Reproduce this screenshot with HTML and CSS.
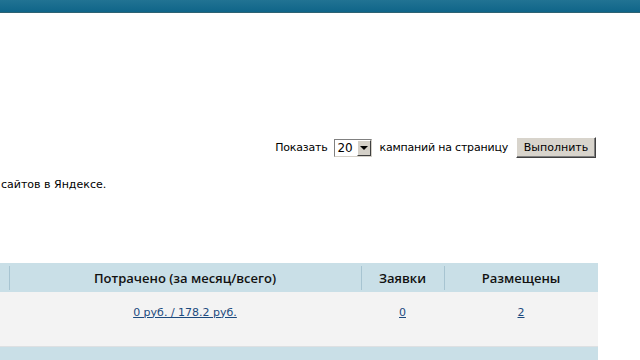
FILE: index.html
```html
<!DOCTYPE html>
<html lang="ru">
<head>
  <meta charset="UTF-8">
  <title>Кампании</title>
  <link rel="stylesheet" href="styles.css">
</head>
<body>
  <div class="topbar"></div>

  <div class="content">
    <form class="pager">
      <span>Показать</span>
      <span class="select">
        <span class="select-value">20</span>
        <span class="select-arrow"></span>
      </span>
      <span>кампаний на страницу</span>
      <button type="button" class="btn">Выполнить</button>
    </form>

    <p class="note">сайтов в Яндексе.</p>

    <table class="campaigns">
      <tr class="head">
        <th class="edge"></th>
        <th class="spent">Потрачено (за месяц/всего)</th>
        <th class="bids">Заявки</th>
        <th class="placed">Размещены</th>
      </tr>
      <tr class="row">
        <td class="edge"></td>
        <td><a href="#">0 руб. / 178.2 руб.</a></td>
        <td><a href="#">0</a></td>
        <td><a href="#">2</a></td>
      </tr>
      <tr class="foot">
        <td colspan="4"></td>
      </tr>
    </table>
  </div>
</body>
</html>
```

FILE: styles.css
```css
body {
  margin: 0;
  background: #fff;
  font-family: "DejaVu Sans", Verdana, sans-serif;
  font-size: 11px;
  color: #000;
}
.topbar {
  height: 12px;
  background: linear-gradient(#217393, #0f6589);
  border-bottom: 1px solid #2d6272;
}
.content {
  width: 598px;
}
.pager {
  display: flex;
  justify-content: flex-end;
  align-items: center;
  gap: 7px;
  margin: 124px 2px 0 0;
  height: 21px;
  letter-spacing: -0.2px;
}
.select {
  display: inline-flex;
  align-items: stretch;
  height: 18px;
  box-sizing: border-box;
  border: 1px solid #808080;
  border-right-color: #d4d0c8;
  border-bottom-color: #d4d0c8;
  background: #fff;
}
.select-value {
  width: 20px;
  padding-left: 2px;
  line-height: 16px;
  font-size: 12px;
  letter-spacing: 0;
}
.select-arrow {
  width: 14px;
  background: #d4d0c8;
  border: 1px solid #fff;
  border-right-color: #404040;
  border-bottom-color: #404040;
  box-sizing: border-box;
  display: flex;
  align-items: center;
  justify-content: center;
}
.select-arrow::after {
  content: "";
  border-left: 4px solid transparent;
  border-right: 4px solid transparent;
  border-top: 4px solid #000;
}
.btn {
  margin-left: 1px;
  height: 21px;
  width: 80px;
  padding: 0;
  font-family: "DejaVu Sans", Verdana, sans-serif;
  font-size: 11px;
  letter-spacing: 0;
  color: #000;
  background: #d8d4cc;
  border: 1px solid #fff;
  border-right-color: #404040;
  border-bottom-color: #404040;
  box-shadow: inset -1px -1px 0 #808080;
}
.note {
  margin: 20px 0 0 1px;
}
.campaigns {
  width: 598px;
  margin-top: 72px;
  border-collapse: collapse;
}
.campaigns th {
  height: 29px;
  padding: 0;
  background: #c9dfe7;
  font-family: "Open Sans", "DejaVu Sans", sans-serif;
  font-weight: 600;
  font-size: 13px;
  color: #111;
  text-align: center;
  background-image: linear-gradient(#a7c4d1, #a7c4d1);
  background-size: 1px 24px;
  background-position: left center;
  background-repeat: no-repeat;
}
.campaigns th.edge {
  width: 9px;
  background-image: none;
}
.campaigns th.spent { width: 352px; }
.campaigns th.bids { width: 83px; }
.campaigns td {
  height: 40px;
  padding: 0 0 14px;
  background: #f3f3f3;
  text-align: center;
  border-bottom: 1px solid #dde0e2;
}
.campaigns a {
  color: #1c4a7e;
}
.campaigns .foot td {
  height: 14px;
  padding: 0;
  background: #c9dfe7;
  border: 0;
}
```
